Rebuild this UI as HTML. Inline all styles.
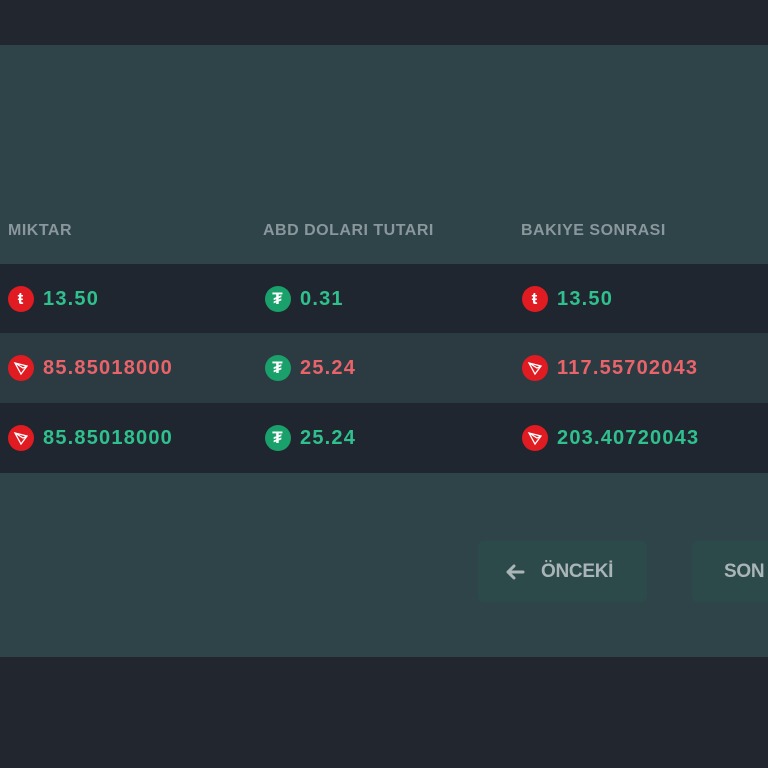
<!DOCTYPE html>
<html><head><meta charset="utf-8"><style>
*{margin:0;padding:0;box-sizing:border-box}
body{width:768px;height:768px;background:#21262f;font-family:"Liberation Sans",sans-serif;position:relative;overflow:hidden}
.panel{position:absolute;left:0;top:45px;width:768px;height:612px;background:#2f4449}
.h{position:absolute;top:222px;font-size:16px;font-weight:bold;color:#8a979c;letter-spacing:0.5px}
.row{position:absolute;left:0;width:768px;height:70px}
.c{position:absolute;display:flex;align-items:center;font-size:20px;font-weight:bold;letter-spacing:1.2px}
.ic{width:26px;height:26px;border-radius:50%;margin-right:9px;display:flex;align-items:center;justify-content:center;color:#fff;font-size:17px;font-weight:bold}
.r{background:#e01b22}.g{background:#1aa06a}
.gt{color:#2fc08e}.rt{color:#e9636a}
.btn{position:absolute;top:541px;height:61px;background:#2d4a4a;border-radius:6px;color:#aab5b8;font-size:19px;font-weight:bold;display:flex;align-items:center;letter-spacing:-0.3px}
</style></head><body>
<div class="panel"></div>
<div class="h" style="left:8px">MIKTAR</div>
<div class="h" style="left:263px">ABD DOLARI TUTARI</div>
<div class="h" style="left:521px">BAKIYE SONRASI</div>
<div class="row" style="top:264px;background:#20262f"></div>
<div class="row" style="top:333px;background:#2c3b41"></div>
<div class="row" style="top:403px;background:#20262f"></div>

<div class="c" style="left:8px;top:286px"><div class="ic r">ŧ</div><span class="gt">13.50</span></div>
<div class="c" style="left:265px;top:286px"><div class="ic g">₮</div><span class="gt">0.31</span></div>
<div class="c" style="left:522px;top:286px"><div class="ic r">ŧ</div><span class="gt">13.50</span></div>

<div class="c" style="left:8px;top:355px"><div class="ic r"><svg width="16" height="16" viewBox="0 0 16 16" fill="none" stroke="#fff" stroke-width="1.3"><path d="M2 3l12 3-6 8z M2 3l6 11 M2 3l8 5 4-2"/></svg></div><span class="rt">85.85018000</span></div>
<div class="c" style="left:265px;top:355px"><div class="ic g">₮</div><span class="rt">25.24</span></div>
<div class="c" style="left:522px;top:355px"><div class="ic r"><svg width="16" height="16" viewBox="0 0 16 16" fill="none" stroke="#fff" stroke-width="1.3"><path d="M2 3l12 3-6 8z M2 3l6 11 M2 3l8 5 4-2"/></svg></div><span class="rt">117.55702043</span></div>

<div class="c" style="left:8px;top:425px"><div class="ic r"><svg width="16" height="16" viewBox="0 0 16 16" fill="none" stroke="#fff" stroke-width="1.3"><path d="M2 3l12 3-6 8z M2 3l6 11 M2 3l8 5 4-2"/></svg></div><span class="gt">85.85018000</span></div>
<div class="c" style="left:265px;top:425px"><div class="ic g">₮</div><span class="gt">25.24</span></div>
<div class="c" style="left:522px;top:425px"><div class="ic r"><svg width="16" height="16" viewBox="0 0 16 16" fill="none" stroke="#fff" stroke-width="1.3"><path d="M2 3l12 3-6 8z M2 3l6 11 M2 3l8 5 4-2"/></svg></div><span class="gt">203.40720043</span></div>

<div class="btn" style="left:478px;width:169px;padding-left:27px"><svg width="20" height="16" viewBox="0 0 20 16" style="margin-right:16px" fill="none" stroke="#aab5b8" stroke-width="3" stroke-linecap="round" stroke-linejoin="round"><path d="M18 8H3M9 2L3 8l6 6"/></svg>ÖNCEKİ</div>
<div class="btn" style="left:692px;width:100px;padding-left:32px">SON</div>
</body></html>
